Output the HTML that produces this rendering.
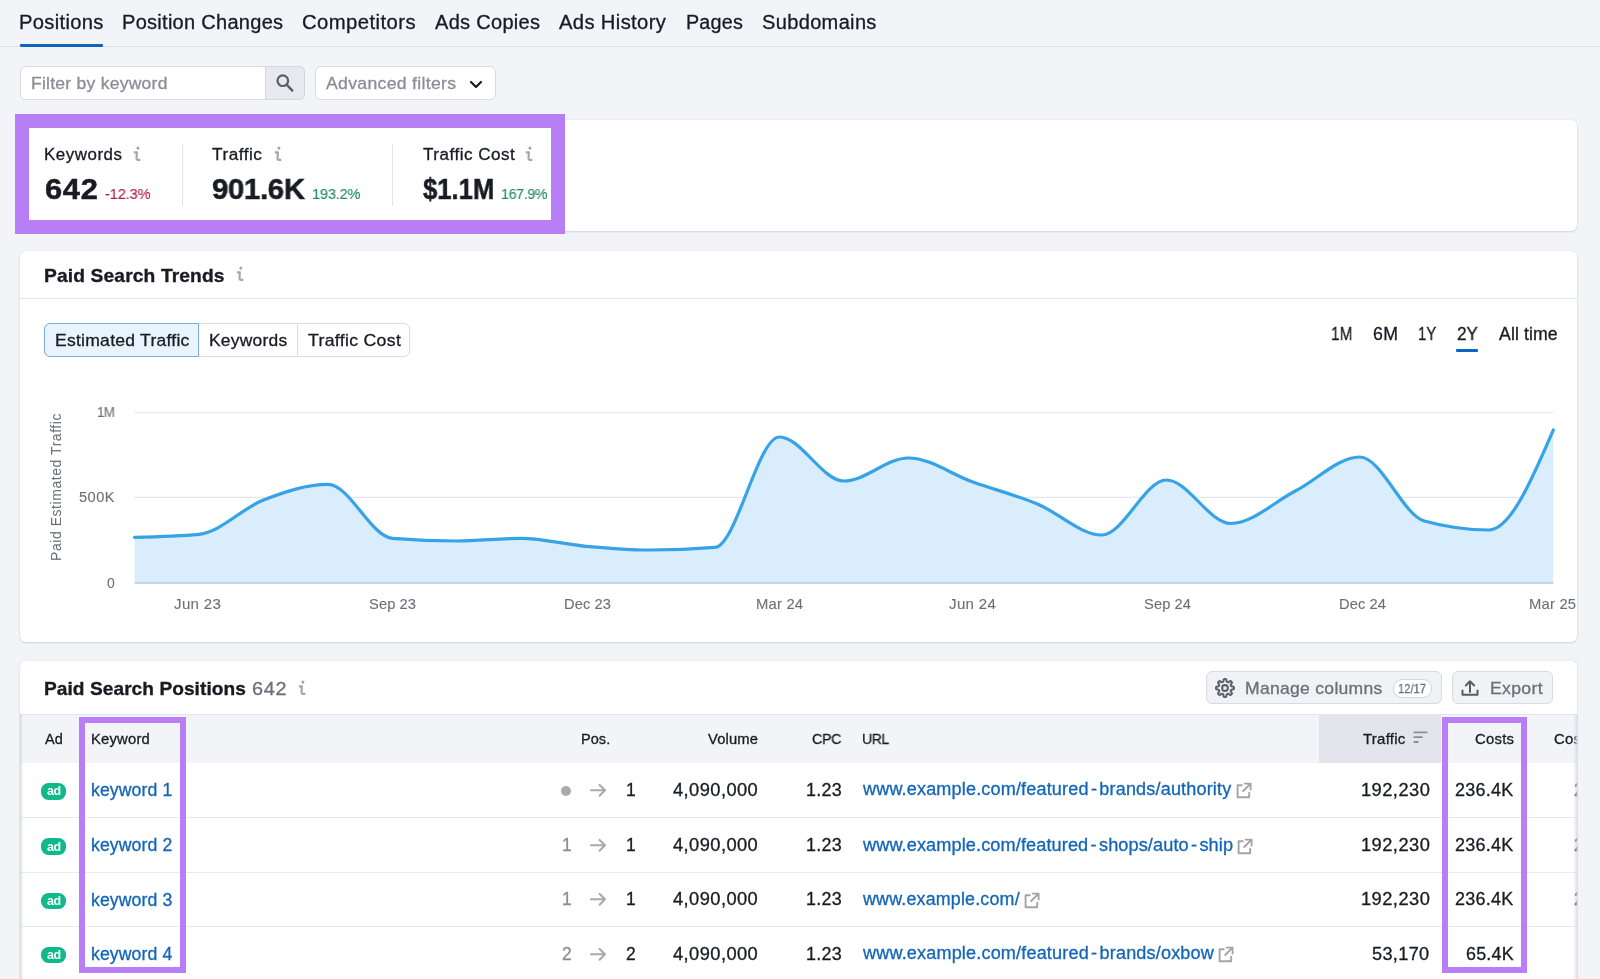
<!DOCTYPE html>
<html><head><meta charset="utf-8"><style>
html,body{margin:0;padding:0;}
body{width:1600px;height:979px;overflow:hidden;position:relative;background:#f3f4f8;font-family:"Liberation Sans",sans-serif;}
.t{position:absolute;white-space:nowrap;line-height:1;will-change:transform;}
.b{position:absolute;box-sizing:border-box;}
</style></head><body>
<div class="b" style="left:0px;top:46px;width:1600px;height:1px;background:#dfe0e6;"></div><span class="t" style="left:18.80px;top:13.00px;font-size:19.5px;color:#191b23;transform:scaleX(1.0337);transform-origin:0.00px 0;letter-spacing:0.322px;-webkit-text-stroke-width:0.3px;">Positions</span><span class="t" style="left:121.80px;top:13.00px;font-size:19.5px;color:#191b23;transform:scaleX(1.0269);transform-origin:0.00px 0;letter-spacing:0.267px;-webkit-text-stroke-width:0.3px;">Position Changes</span><span class="t" style="left:302.10px;top:13.00px;font-size:19.5px;color:#191b23;transform:scaleX(1.0404);transform-origin:0.00px 0;letter-spacing:0.408px;-webkit-text-stroke-width:0.3px;">Competitors</span><span class="t" style="left:434.60px;top:13.00px;font-size:19.5px;color:#191b23;transform:scaleX(1.0264);transform-origin:0.00px 0;letter-spacing:0.285px;-webkit-text-stroke-width:0.3px;">Ads Copies</span><span class="t" style="left:559.10px;top:13.00px;font-size:19.5px;color:#191b23;transform:scaleX(1.0359);transform-origin:0.00px 0;letter-spacing:0.345px;-webkit-text-stroke-width:0.3px;">Ads History</span><span class="t" style="left:685.50px;top:13.00px;font-size:19.5px;color:#191b23;transform:scaleX(1.0137);transform-origin:0.00px 0;letter-spacing:0.187px;-webkit-text-stroke-width:0.3px;">Pages</span><span class="t" style="left:761.60px;top:13.00px;font-size:19.5px;color:#191b23;transform:scaleX(1.0276);transform-origin:0.00px 0;letter-spacing:0.323px;-webkit-text-stroke-width:0.3px;">Subdomains</span><div class="b" style="left:20px;top:44px;width:83px;height:3px;background:#0c66bf;border-radius:1px;"></div><div class="b" style="left:20px;top:66.3px;width:285px;height:33.8px;background:#fff;border:1px solid #dadbe1;border-radius:6px;"></div><div class="b" style="left:265px;top:66.3px;width:40px;height:33.8px;background:#e8e9ef;border:1px solid #d6d7de;border-radius:0 6px 6px 0;"></div><svg class="b" style="left:275px;top:73px" width="20" height="20" viewBox="0 0 20 20"><circle cx="7.8" cy="7.7" r="5.3" fill="none" stroke="#5a5c66" stroke-width="2.2"/><line x1="11.7" y1="11.6" x2="17.3" y2="17.6" stroke="#5a5c66" stroke-width="2.3" stroke-linecap="round"/></svg><span class="t" style="left:30.70px;top:75.00px;font-size:17px;color:#8b8d97;transform:scaleX(1.0310);transform-origin:0.00px 0;letter-spacing:0.242px;-webkit-text-stroke-width:0.3px;">Filter by keyword</span><div class="b" style="left:315.3px;top:66.3px;width:180.5px;height:33.8px;background:#fff;border:1px solid #dadbe1;border-radius:6px;"></div><span class="t" style="left:326.00px;top:75.00px;font-size:17px;color:#8b8d97;transform:scaleX(1.0374);transform-origin:0.00px 0;letter-spacing:0.291px;-webkit-text-stroke-width:0.3px;">Advanced filters</span><svg class="b" style="left:468px;top:77.5px" width="16" height="14" viewBox="0 0 16 14"><polyline points="3,4 8,9 13,4" fill="none" stroke="#191b23" stroke-width="2.2" stroke-linecap="round" stroke-linejoin="round"/></svg><div class="b" style="left:20px;top:120px;width:1557px;height:111px;background:#fff;border-radius:6px;box-shadow:0 0 3px rgba(25,27,35,.07),0 1px 2px rgba(25,27,35,.12);"></div><div class="b" style="left:15px;top:114px;width:550px;height:120px;border:14px solid #b77ef6;"></div><div class="b" style="left:182px;top:144px;width:1px;height:62px;background:#e4e5ea;"></div><div class="b" style="left:392px;top:144px;width:1px;height:62px;background:#e4e5ea;"></div><span class="t" style="left:44.00px;top:147.00px;font-size:16px;color:#191b23;transform:scaleX(1.0552);transform-origin:0.00px 0;letter-spacing:0.525px;-webkit-text-stroke-width:0.3px;">Keywords</span><svg class="b" style="left:133.3px;top:145.9px" width="9" height="16" viewBox="0 0 9 16"><circle cx="4.9" cy="2.1" r="1.55" fill="#a3a5ad"/><path d="M0.9 6.4H3.9L3.5 12.1Q3.4 13.9 5.2 13.9H7.3" fill="none" stroke="#a3a5ad" stroke-width="2.1" stroke-linejoin="round"/></svg><span class="t" style="left:44.90px;top:174.00px;font-size:30px;color:#191b23;transform:scaleX(1.0279);transform-origin:0.00px 0;font-weight:700;letter-spacing:0.681px;-webkit-text-stroke-width:0.5px;">642</span><span class="t" style="left:105.00px;top:186.00px;font-size:15px;color:#b3184b;transform:scaleX(0.9805);transform-origin:0.00px 0;letter-spacing:-0.189px;-webkit-text-stroke-width:0.1px;">-12.3%</span><span class="t" style="left:212.00px;top:147.00px;font-size:16px;color:#191b23;transform:scaleX(1.0734);transform-origin:0.00px 0;letter-spacing:0.497px;-webkit-text-stroke-width:0.3px;">Traffic</span><svg class="b" style="left:274.0px;top:145.8px" width="9" height="16" viewBox="0 0 9 16"><circle cx="4.9" cy="2.1" r="1.55" fill="#a3a5ad"/><path d="M0.9 6.4H3.9L3.5 12.1Q3.4 13.9 5.2 13.9H7.3" fill="none" stroke="#a3a5ad" stroke-width="2.1" stroke-linejoin="round"/></svg><span class="t" style="left:212.00px;top:174.00px;font-size:30px;color:#191b23;transform:scaleX(0.9806);transform-origin:0.00px 0;font-weight:700;letter-spacing:-0.382px;-webkit-text-stroke-width:0.5px;">901.6K</span><span class="t" style="left:312.00px;top:186.00px;font-size:15px;color:#23896a;transform:scaleX(0.9769);transform-origin:0.00px 0;letter-spacing:-0.241px;-webkit-text-stroke-width:0.1px;">193.2%</span><span class="t" style="left:422.50px;top:147.00px;font-size:16px;color:#191b23;transform:scaleX(1.0672);transform-origin:0.00px 0;letter-spacing:0.463px;-webkit-text-stroke-width:0.3px;">Traffic Cost</span><svg class="b" style="left:525.0px;top:145.8px" width="9" height="16" viewBox="0 0 9 16"><circle cx="4.9" cy="2.1" r="1.55" fill="#a3a5ad"/><path d="M0.9 6.4H3.9L3.5 12.1Q3.4 13.9 5.2 13.9H7.3" fill="none" stroke="#a3a5ad" stroke-width="2.1" stroke-linejoin="round"/></svg><span class="t" style="left:422.50px;top:174.00px;font-size:30px;color:#191b23;transform:scaleX(0.8543);transform-origin:0.00px 0;font-weight:700;-webkit-text-stroke-width:0.5px;">$1.1M</span><span class="t" style="left:501.00px;top:186.00px;font-size:15px;color:#23896a;transform:scaleX(0.9572);transform-origin:0.00px 0;letter-spacing:-0.454px;-webkit-text-stroke-width:0.1px;">167.9%</span><div class="b" style="left:20px;top:251px;width:1557px;height:390.5px;background:#fff;border-radius:6px;box-shadow:0 0 3px rgba(25,27,35,.07),0 1px 2px rgba(25,27,35,.12);"></div><div class="b" style="left:20px;top:298px;width:1557px;height:1px;background:#e4e5ea;"></div><span class="t" style="left:44.00px;top:266.00px;font-size:19px;color:#191b23;transform:scaleX(1.0119);transform-origin:0.00px 0;font-weight:700;letter-spacing:0.122px;-webkit-text-stroke-width:0.35px;">Paid Search Trends</span><svg class="b" style="left:235.5px;top:266.0px" width="9" height="16" viewBox="0 0 9 16"><circle cx="4.9" cy="2.1" r="1.55" fill="#a3a5ad"/><path d="M0.9 6.4H3.9L3.5 12.1Q3.4 13.9 5.2 13.9H7.3" fill="none" stroke="#a3a5ad" stroke-width="2.1" stroke-linejoin="round"/></svg><div class="b" style="left:44px;top:323.3px;width:366.3px;height:34.2px;background:#fff;border:1px solid #dcdde3;border-radius:6px;"></div><div class="b" style="left:297px;top:323.3px;width:1px;height:34.2px;background:#dcdde3;"></div><div class="b" style="left:44px;top:323.3px;width:155px;height:34.2px;background:#e8f3fd;border:1px solid #7aaedc;border-radius:6px 0 0 6px;"></div><span class="t" style="left:54.60px;top:332.00px;font-size:17px;color:#191b23;transform:scaleX(1.0320);transform-origin:0.00px 0;letter-spacing:0.245px;-webkit-text-stroke-width:0.3px;">Estimated Traffic</span><span class="t" style="left:208.75px;top:332.00px;font-size:17px;color:#191b23;transform:scaleX(1.0239);transform-origin:0.00px 0;letter-spacing:0.249px;-webkit-text-stroke-width:0.3px;">Keywords</span><span class="t" style="left:307.80px;top:332.00px;font-size:17px;color:#191b23;transform:scaleX(1.0399);transform-origin:0.00px 0;letter-spacing:0.300px;-webkit-text-stroke-width:0.3px;">Traffic Cost</span><span class="t" style="left:1330.50px;top:326.00px;font-size:17.5px;color:#191b23;transform:scaleX(0.8839);transform-origin:0.00px 0;-webkit-text-stroke-width:0.3px;">1M</span><span class="t" style="left:1373.00px;top:326.00px;font-size:17.5px;color:#191b23;transform:scaleX(1.0139);transform-origin:0.00px 0;letter-spacing:0.333px;-webkit-text-stroke-width:0.3px;">6M</span><span class="t" style="left:1418.00px;top:326.00px;font-size:17.5px;color:#191b23;transform:scaleX(0.8513);transform-origin:0.00px 0;-webkit-text-stroke-width:0.3px;">1Y</span><span class="t" style="left:1456.75px;top:326.00px;font-size:17.5px;color:#191b23;transform:scaleX(0.9840);transform-origin:0.00px 0;letter-spacing:-0.349px;-webkit-text-stroke-width:0.3px;">2Y</span><span class="t" style="left:1498.75px;top:326.00px;font-size:17.5px;color:#191b23;transform:scaleX(1.0118);transform-origin:0.00px 0;letter-spacing:0.095px;-webkit-text-stroke-width:0.3px;">All time</span><div class="b" style="left:1456.25px;top:349.2px;width:21.75px;height:2.6px;background:#0c66bf;border-radius:1px;"></div><svg class="b" style="left:0;top:0" width="1600" height="979" viewBox="0 0 1600 979">
<line x1="134.5" y1="412.5" x2="1553.3" y2="412.5" stroke="#e6e7ec" stroke-width="1.2"/>
<line x1="134.5" y1="497.4" x2="1553.3" y2="497.4" stroke="#e6e7ec" stroke-width="1.2"/>
<path d="M134.50,537.30 C156.00,536.80 177.49,536.30 198.99,534.30 C220.49,532.30 241.98,508.32 263.48,500.00 C284.98,491.68 306.48,484.40 327.97,484.40 C349.47,484.40 370.97,536.67 392.46,538.40 C413.96,540.13 435.46,541.00 456.95,541.00 C478.45,541.00 499.95,538.40 521.45,538.40 C542.94,538.40 564.44,544.37 585.94,546.30 C607.43,548.23 628.93,550.00 650.43,550.00 C671.92,550.00 693.42,549.13 714.92,547.40 C736.42,545.67 757.91,437.00 779.41,437.00 C800.91,437.00 822.40,481.00 843.90,481.00 C865.40,481.00 886.89,458.00 908.39,458.00 C929.89,458.00 951.38,474.33 972.88,482.00 C994.38,489.67 1015.88,495.17 1037.37,504.00 C1058.87,512.83 1080.37,535.00 1101.86,535.00 C1123.36,535.00 1144.86,480.00 1166.35,480.00 C1187.85,480.00 1209.35,523.50 1230.85,523.50 C1252.34,523.50 1273.84,502.08 1295.34,491.00 C1316.83,479.92 1338.33,457.00 1359.83,457.00 C1381.32,457.00 1402.82,515.00 1424.32,521.00 C1445.82,527.00 1467.31,530.00 1488.81,530.00 C1510.31,530.00 1531.80,480.00 1553.30,430.00 L1553.30,583 L134.50,583 Z" fill="#d9edfc"/>
<line x1="134.5" y1="583" x2="1553.3" y2="583" stroke="#b9c8d6" stroke-width="1.4"/>
<path d="M134.50,537.30 C156.00,536.80 177.49,536.30 198.99,534.30 C220.49,532.30 241.98,508.32 263.48,500.00 C284.98,491.68 306.48,484.40 327.97,484.40 C349.47,484.40 370.97,536.67 392.46,538.40 C413.96,540.13 435.46,541.00 456.95,541.00 C478.45,541.00 499.95,538.40 521.45,538.40 C542.94,538.40 564.44,544.37 585.94,546.30 C607.43,548.23 628.93,550.00 650.43,550.00 C671.92,550.00 693.42,549.13 714.92,547.40 C736.42,545.67 757.91,437.00 779.41,437.00 C800.91,437.00 822.40,481.00 843.90,481.00 C865.40,481.00 886.89,458.00 908.39,458.00 C929.89,458.00 951.38,474.33 972.88,482.00 C994.38,489.67 1015.88,495.17 1037.37,504.00 C1058.87,512.83 1080.37,535.00 1101.86,535.00 C1123.36,535.00 1144.86,480.00 1166.35,480.00 C1187.85,480.00 1209.35,523.50 1230.85,523.50 C1252.34,523.50 1273.84,502.08 1295.34,491.00 C1316.83,479.92 1338.33,457.00 1359.83,457.00 C1381.32,457.00 1402.82,515.00 1424.32,521.00 C1445.82,527.00 1467.31,530.00 1488.81,530.00 C1510.31,530.00 1531.80,480.00 1553.30,430.00" fill="none" stroke="#35a3e6" stroke-width="3.2" stroke-linejoin="round" stroke-linecap="round"/>
</svg><span class="t" style="left:96.70px;top:405.00px;font-size:14px;color:#6c6e79;transform:scaleX(0.9599);transform-origin:0.00px 0;letter-spacing:-0.813px;-webkit-text-stroke-width:0.1px;">1M</span><span class="t" style="left:79.00px;top:490.00px;font-size:14px;color:#6c6e79;transform:scaleX(1.0445);transform-origin:0.00px 0;letter-spacing:0.464px;-webkit-text-stroke-width:0.1px;">500K</span><span class="t" style="left:106.70px;top:576.00px;font-size:14px;color:#6c6e79;-webkit-text-stroke-width:0.1px;">0</span><span class="t" style="left:173.90px;top:597.00px;font-size:14.5px;color:#6c6e79;transform:scaleX(1.0393);transform-origin:0.00px 0;letter-spacing:0.330px;-webkit-text-stroke-width:0.1px;">Jun 23</span><span class="t" style="left:368.50px;top:597.00px;font-size:14.5px;color:#6c6e79;transform:scaleX(1.0113);transform-origin:0.00px 0;letter-spacing:0.102px;-webkit-text-stroke-width:0.1px;">Sep 23</span><span class="t" style="left:563.50px;top:597.00px;font-size:14.5px;color:#6c6e79;transform:scaleX(1.0113);transform-origin:0.00px 0;letter-spacing:0.102px;-webkit-text-stroke-width:0.1px;">Dec 23</span><span class="t" style="left:756.00px;top:597.00px;font-size:14.5px;color:#6c6e79;transform:scaleX(1.0211);transform-origin:0.00px 0;letter-spacing:0.187px;-webkit-text-stroke-width:0.1px;">Mar 24</span><span class="t" style="left:948.50px;top:597.00px;font-size:14.5px;color:#6c6e79;transform:scaleX(1.0393);transform-origin:0.00px 0;letter-spacing:0.330px;-webkit-text-stroke-width:0.1px;">Jun 24</span><span class="t" style="left:1143.50px;top:597.00px;font-size:14.5px;color:#6c6e79;transform:scaleX(1.0113);transform-origin:0.00px 0;letter-spacing:0.102px;-webkit-text-stroke-width:0.1px;">Sep 24</span><span class="t" style="left:1338.50px;top:597.00px;font-size:14.5px;color:#6c6e79;transform:scaleX(1.0113);transform-origin:0.00px 0;letter-spacing:0.102px;-webkit-text-stroke-width:0.1px;">Dec 24</span><span class="t" style="left:1528.80px;top:597.00px;font-size:14.5px;color:#6c6e79;transform:scaleX(1.0211);transform-origin:0.00px 0;letter-spacing:0.187px;-webkit-text-stroke-width:0.1px;">Mar 25</span><span class="t" style="left:55.5px;top:487.3px;font-size:14px;color:#6c6e79;transform:translate(-50%,-50%) rotate(-90deg);letter-spacing:0.55px;">Paid Estimated Traffic</span><div class="b" style="left:20px;top:661px;width:1557px;height:330px;background:#fff;border-radius:6px;box-shadow:0 0 3px rgba(25,27,35,.07),0 1px 2px rgba(25,27,35,.12);overflow:hidden;"></div><span class="t" style="left:44.00px;top:679.00px;font-size:19px;color:#191b23;transform:scaleX(1.0058);transform-origin:0.00px 0;font-weight:700;letter-spacing:0.057px;-webkit-text-stroke-width:0.35px;">Paid Search Positions</span><span class="t" style="left:252.20px;top:679.00px;font-size:19px;color:#6c6e79;transform:scaleX(1.0468);transform-origin:0.00px 0;letter-spacing:0.709px;-webkit-text-stroke-width:0.3px;">642</span><svg class="b" style="left:298.1px;top:679.9px" width="9" height="16" viewBox="0 0 9 16"><circle cx="4.9" cy="2.1" r="1.55" fill="#a3a5ad"/><path d="M0.9 6.4H3.9L3.5 12.1Q3.4 13.9 5.2 13.9H7.3" fill="none" stroke="#a3a5ad" stroke-width="2.1" stroke-linejoin="round"/></svg><div class="b" style="left:1206px;top:670.8px;width:236px;height:33.3px;background:#f1f2f5;border:1px solid #d9dae0;border-radius:6px;"></div><svg class="b" style="left:1212.9px;top:675.6px" width="24" height="24" viewBox="0 0 24 24"><path fill="none" stroke="#5f626d" stroke-width="2.1" stroke-linejoin="round" d="M20.95,12.00 L20.94,12.23 L20.92,12.47 L20.88,12.70 L20.80,12.93 L20.65,13.14 L20.35,13.32 L19.86,13.46 L19.25,13.54 L18.75,13.62 L18.45,13.73 L18.28,13.86 L18.17,14.01 L18.09,14.16 L18.02,14.31 L17.96,14.47 L17.90,14.62 L17.83,14.78 L17.78,14.95 L17.75,15.12 L17.78,15.34 L17.92,15.63 L18.21,16.04 L18.58,16.53 L18.84,16.97 L18.92,17.31 L18.88,17.57 L18.78,17.79 L18.64,17.98 L18.49,18.16 L18.33,18.33 L18.16,18.49 L17.98,18.64 L17.79,18.78 L17.57,18.88 L17.31,18.92 L16.97,18.84 L16.53,18.58 L16.04,18.21 L15.63,17.92 L15.34,17.78 L15.12,17.75 L14.95,17.78 L14.78,17.83 L14.62,17.90 L14.47,17.96 L14.31,18.02 L14.16,18.09 L14.01,18.17 L13.86,18.28 L13.73,18.45 L13.62,18.75 L13.54,19.25 L13.46,19.86 L13.32,20.35 L13.14,20.65 L12.93,20.80 L12.70,20.88 L12.47,20.92 L12.23,20.94 L12.00,20.95 L11.77,20.94 L11.53,20.92 L11.30,20.88 L11.07,20.80 L10.86,20.65 L10.68,20.35 L10.54,19.86 L10.46,19.25 L10.38,18.75 L10.27,18.45 L10.14,18.28 L9.99,18.17 L9.84,18.09 L9.69,18.02 L9.53,17.96 L9.38,17.90 L9.22,17.83 L9.05,17.78 L8.88,17.75 L8.66,17.78 L8.37,17.92 L7.96,18.21 L7.47,18.58 L7.03,18.84 L6.69,18.92 L6.43,18.88 L6.21,18.78 L6.02,18.64 L5.84,18.49 L5.67,18.33 L5.51,18.16 L5.36,17.98 L5.22,17.79 L5.12,17.57 L5.08,17.31 L5.16,16.97 L5.42,16.53 L5.79,16.04 L6.08,15.63 L6.22,15.34 L6.25,15.12 L6.22,14.95 L6.17,14.78 L6.10,14.62 L6.04,14.47 L5.98,14.31 L5.91,14.16 L5.83,14.01 L5.72,13.86 L5.55,13.73 L5.25,13.62 L4.75,13.54 L4.14,13.46 L3.65,13.32 L3.35,13.14 L3.20,12.93 L3.12,12.70 L3.08,12.47 L3.06,12.23 L3.05,12.00 L3.06,11.77 L3.08,11.53 L3.12,11.30 L3.20,11.07 L3.35,10.86 L3.65,10.68 L4.14,10.54 L4.75,10.46 L5.25,10.38 L5.55,10.27 L5.72,10.14 L5.83,9.99 L5.91,9.84 L5.98,9.69 L6.04,9.53 L6.10,9.38 L6.17,9.22 L6.22,9.05 L6.25,8.88 L6.22,8.66 L6.08,8.37 L5.79,7.96 L5.42,7.47 L5.16,7.03 L5.08,6.69 L5.12,6.43 L5.22,6.21 L5.36,6.02 L5.51,5.84 L5.67,5.67 L5.84,5.51 L6.02,5.36 L6.21,5.22 L6.43,5.12 L6.69,5.08 L7.03,5.16 L7.47,5.42 L7.96,5.79 L8.37,6.08 L8.66,6.22 L8.88,6.25 L9.05,6.22 L9.22,6.17 L9.38,6.10 L9.53,6.04 L9.69,5.98 L9.84,5.91 L9.99,5.83 L10.14,5.72 L10.27,5.55 L10.38,5.25 L10.46,4.75 L10.54,4.14 L10.68,3.65 L10.86,3.35 L11.07,3.20 L11.30,3.12 L11.53,3.08 L11.77,3.06 L12.00,3.05 L12.23,3.06 L12.47,3.08 L12.70,3.12 L12.93,3.20 L13.14,3.35 L13.32,3.65 L13.46,4.14 L13.54,4.75 L13.62,5.25 L13.73,5.55 L13.86,5.72 L14.01,5.83 L14.16,5.91 L14.31,5.98 L14.47,6.04 L14.62,6.10 L14.78,6.17 L14.95,6.22 L15.12,6.25 L15.34,6.22 L15.63,6.08 L16.04,5.79 L16.53,5.42 L16.97,5.16 L17.31,5.08 L17.57,5.12 L17.79,5.22 L17.98,5.36 L18.16,5.51 L18.33,5.67 L18.49,5.84 L18.64,6.02 L18.78,6.21 L18.88,6.43 L18.92,6.69 L18.84,7.03 L18.58,7.47 L18.21,7.96 L17.92,8.37 L17.78,8.66 L17.75,8.88 L17.78,9.05 L17.83,9.22 L17.90,9.38 L17.96,9.53 L18.02,9.69 L18.09,9.84 L18.17,9.99 L18.28,10.14 L18.45,10.27 L18.75,10.38 L19.25,10.46 L19.86,10.54 L20.35,10.68 L20.65,10.86 L20.80,11.07 L20.88,11.30 L20.92,11.53 L20.94,11.77Z"/><circle cx="12" cy="12" r="2.9" fill="none" stroke="#5f626d" stroke-width="2.1"/></svg><span class="t" style="left:1245.00px;top:680.00px;font-size:17px;color:#6c6e79;transform:scaleX(1.0303);transform-origin:0.00px 0;letter-spacing:0.293px;-webkit-text-stroke-width:0.3px;">Manage columns</span><div class="b" style="left:1393px;top:679px;width:38.5px;height:18.5px;background:#fff;border:1px solid #d4d5dd;border-radius:9px;"></div><span class="t" style="left:1398.30px;top:682.00px;font-size:13px;color:#6c6e79;transform:scaleX(0.8598);transform-origin:0.00px 0;-webkit-text-stroke-width:0.3px;">12/17</span><div class="b" style="left:1451.5px;top:670.8px;width:101px;height:33.3px;background:#f1f2f5;border:1px solid #d9dae0;border-radius:6px;"></div><svg class="b" style="left:1460px;top:678px" width="20" height="20" viewBox="0 0 20 20"><path d="M10 14V3.5M5.8 7.5L10 3.3l4.2 4.2M2.5 12.5v4.2h15v-4.2" fill="none" stroke="#575a66" stroke-width="2" stroke-linecap="round" stroke-linejoin="round"/></svg><span class="t" style="left:1490.40px;top:680.00px;font-size:17px;color:#6c6e79;transform:scaleX(1.0353);transform-origin:0.00px 0;letter-spacing:0.335px;-webkit-text-stroke-width:0.3px;">Export</span><div class="b" style="left:20px;top:713.5px;width:1557px;height:49.5px;background:#f3f4f8;border-top:1px solid #e4e5ea;"></div><div class="b" style="left:1319px;top:713.5px;width:122px;height:49.5px;background:#e4e5ec;"></div><span class="t" style="left:44.75px;top:732.00px;font-size:14.5px;color:#191b23;letter-spacing:-0.012px;-webkit-text-stroke-width:0.3px;">Ad</span><span class="t" style="left:90.60px;top:732.00px;font-size:14.5px;color:#191b23;transform:scaleX(1.0212);transform-origin:0.00px 0;letter-spacing:0.195px;-webkit-text-stroke-width:0.3px;">Keyword</span><span class="t" style="left:580.80px;top:732.00px;font-size:14.5px;color:#191b23;transform:scaleX(1.0034);transform-origin:0.00px 0;letter-spacing:0.033px;-webkit-text-stroke-width:0.3px;">Pos.</span><span class="t" style="left:708.00px;top:732.00px;font-size:14.5px;color:#191b23;transform:scaleX(1.0170);transform-origin:0.00px 0;letter-spacing:0.162px;-webkit-text-stroke-width:0.3px;">Volume</span><span class="t" style="left:812.20px;top:732.00px;font-size:14.5px;color:#191b23;transform:scaleX(0.9805);transform-origin:0.00px 0;letter-spacing:-0.305px;-webkit-text-stroke-width:0.3px;">CPC</span><span class="t" style="left:862.20px;top:732.00px;font-size:14.5px;color:#191b23;transform:scaleX(0.9690);transform-origin:0.00px 0;letter-spacing:-0.464px;-webkit-text-stroke-width:0.3px;">URL</span><span class="t" style="left:1362.50px;top:732.00px;font-size:14.5px;color:#191b23;transform:scaleX(1.0353);transform-origin:0.00px 0;letter-spacing:0.224px;-webkit-text-stroke-width:0.3px;">Traffic</span><svg class="b" style="left:1412px;top:730px" width="16" height="14" viewBox="0 0 16 14"><path d="M2.3 2.4h12.4M2.3 7.2h7.6M2.3 12h3.4" stroke="#8b8d97" stroke-width="1.8" stroke-linecap="round"/></svg><span class="t" style="left:1474.60px;top:732.00px;font-size:14.5px;color:#191b23;transform:scaleX(1.0250);transform-origin:0.00px 0;letter-spacing:0.226px;-webkit-text-stroke-width:0.3px;">Costs</span><span class="t" style="left:1553.60px;top:732.00px;font-size:14.5px;color:#191b23;transform:scaleX(1.0250);transform-origin:0.00px 0;letter-spacing:0.226px;-webkit-text-stroke-width:0.3px;">Costs</span><div class="b" style="left:20px;top:817.4px;width:1557px;height:1px;background:#e9eaee;"></div><div class="b" style="left:20px;top:872.3px;width:1557px;height:1px;background:#e9eaee;"></div><div class="b" style="left:20px;top:926.4px;width:1557px;height:1px;background:#e9eaee;"></div><div class="b" style="left:41px;top:783.1999999999999px;width:25px;height:16.6px;background:#13b88a;border-radius:7.5px;"></div><span class="t" style="left:46.50px;top:785.00px;font-size:12.5px;color:#f4fffa;transform:scaleX(0.9738);transform-origin:0.00px 0;font-weight:700;letter-spacing:-0.391px;">ad</span><span class="t" style="left:90.90px;top:782.00px;font-size:17.5px;color:#1265b8;transform:scaleX(1.0094);transform-origin:0.00px 0;letter-spacing:0.093px;-webkit-text-stroke-width:0.3px;">keyword 1</span><div class="b" style="left:561.2px;top:785.5px;width:10px;height:10px;background:#a9aaae;border-radius:50%;"></div><svg class="b" style="left:589px;top:781.9px" width="19" height="16" viewBox="0 0 19 16"><path d="M2 8.3h14M10.6 2.9L16 8.3l-5.4 5.4" fill="none" stroke="#a9aaae" stroke-width="2.1" stroke-linecap="round" stroke-linejoin="round"/></svg><span class="t" style="left:626.00px;top:782.00px;font-size:17.5px;color:#191b23;-webkit-text-stroke-width:0.3px;">1</span><span class="t" style="left:673.40px;top:782.00px;font-size:17.5px;color:#191b23;transform:scaleX(1.0445);transform-origin:0.00px 0;letter-spacing:0.414px;-webkit-text-stroke-width:0.3px;">4,090,000</span><span class="t" style="left:805.60px;top:782.00px;font-size:17.5px;color:#191b23;transform:scaleX(1.0244);transform-origin:0.00px 0;letter-spacing:0.270px;-webkit-text-stroke-width:0.3px;">1.23</span><span class="t" style="left:862.69px;top:781.00px;font-size:17.5px;color:#1265b8;transform:scaleX(1.0317);transform-origin:-0.09px 0;letter-spacing:0.156px;-webkit-text-stroke-width:0.3px;">www.example.com/featured<span style="margin:0 2.2px">-</span>brands/authority</span><svg class="b" style="left:1234.6px;top:782.3px" width="17" height="17" viewBox="0 0 17 17"><path d="M6.8 3.2H2.6v12h11.6v-4.4M9.6 1.6h6v6M15.3 1.9L8.2 9" fill="none" stroke="#a3a4aa" stroke-width="1.9" stroke-linecap="round" stroke-linejoin="round"/></svg><span class="t" style="left:1360.60px;top:782.00px;font-size:17.5px;color:#191b23;transform:scaleX(1.0438);transform-origin:0.00px 0;letter-spacing:0.442px;-webkit-text-stroke-width:0.3px;">192,230</span><span class="t" style="left:1455.10px;top:782.00px;font-size:17.5px;color:#191b23;transform:scaleX(1.0255);transform-origin:0.00px 0;letter-spacing:0.275px;-webkit-text-stroke-width:0.3px;">236.4K</span><span class="t" style="left:1574.40px;top:782.00px;font-size:17.5px;color:#191b23;-webkit-text-stroke-width:0.3px;">236.4K</span><div class="b" style="left:41px;top:838.4px;width:25px;height:16.6px;background:#13b88a;border-radius:7.5px;"></div><span class="t" style="left:46.50px;top:841.00px;font-size:12.5px;color:#f4fffa;transform:scaleX(0.9738);transform-origin:0.00px 0;font-weight:700;letter-spacing:-0.391px;">ad</span><span class="t" style="left:90.90px;top:837.00px;font-size:17.5px;color:#1265b8;transform:scaleX(1.0094);transform-origin:0.00px 0;letter-spacing:0.093px;-webkit-text-stroke-width:0.3px;">keyword 2</span><span class="t" style="left:561.80px;top:837.00px;font-size:17.5px;color:#8b8d97;-webkit-text-stroke-width:0.3px;">1</span><svg class="b" style="left:589px;top:837.1px" width="19" height="16" viewBox="0 0 19 16"><path d="M2 8.3h14M10.6 2.9L16 8.3l-5.4 5.4" fill="none" stroke="#a9aaae" stroke-width="2.1" stroke-linecap="round" stroke-linejoin="round"/></svg><span class="t" style="left:626.00px;top:837.00px;font-size:17.5px;color:#191b23;-webkit-text-stroke-width:0.3px;">1</span><span class="t" style="left:673.40px;top:837.00px;font-size:17.5px;color:#191b23;transform:scaleX(1.0445);transform-origin:0.00px 0;letter-spacing:0.414px;-webkit-text-stroke-width:0.3px;">4,090,000</span><span class="t" style="left:805.60px;top:837.00px;font-size:17.5px;color:#191b23;transform:scaleX(1.0244);transform-origin:0.00px 0;letter-spacing:0.270px;-webkit-text-stroke-width:0.3px;">1.23</span><span class="t" style="left:862.69px;top:837.00px;font-size:17.5px;color:#1265b8;transform:scaleX(1.0373);transform-origin:-0.09px 0;letter-spacing:0.092px;-webkit-text-stroke-width:0.3px;">www.example.com/featured<span style="margin:0 2.2px">-</span>shops/auto<span style="margin:0 2.2px">-</span>ship</span><svg class="b" style="left:1236.3px;top:837.5px" width="17" height="17" viewBox="0 0 17 17"><path d="M6.8 3.2H2.6v12h11.6v-4.4M9.6 1.6h6v6M15.3 1.9L8.2 9" fill="none" stroke="#a3a4aa" stroke-width="1.9" stroke-linecap="round" stroke-linejoin="round"/></svg><span class="t" style="left:1360.60px;top:837.00px;font-size:17.5px;color:#191b23;transform:scaleX(1.0438);transform-origin:0.00px 0;letter-spacing:0.442px;-webkit-text-stroke-width:0.3px;">192,230</span><span class="t" style="left:1455.10px;top:837.00px;font-size:17.5px;color:#191b23;transform:scaleX(1.0255);transform-origin:0.00px 0;letter-spacing:0.275px;-webkit-text-stroke-width:0.3px;">236.4K</span><span class="t" style="left:1574.40px;top:837.00px;font-size:17.5px;color:#191b23;-webkit-text-stroke-width:0.3px;">236.4K</span><div class="b" style="left:41px;top:892.6999999999999px;width:25px;height:16.6px;background:#13b88a;border-radius:7.5px;"></div><span class="t" style="left:46.50px;top:895.00px;font-size:12.5px;color:#f4fffa;transform:scaleX(0.9738);transform-origin:0.00px 0;font-weight:700;letter-spacing:-0.391px;">ad</span><span class="t" style="left:90.90px;top:892.00px;font-size:17.5px;color:#1265b8;transform:scaleX(1.0094);transform-origin:0.00px 0;letter-spacing:0.093px;-webkit-text-stroke-width:0.3px;">keyword 3</span><span class="t" style="left:561.80px;top:891.00px;font-size:17.5px;color:#8b8d97;-webkit-text-stroke-width:0.3px;">1</span><svg class="b" style="left:589px;top:891.4px" width="19" height="16" viewBox="0 0 19 16"><path d="M2 8.3h14M10.6 2.9L16 8.3l-5.4 5.4" fill="none" stroke="#a9aaae" stroke-width="2.1" stroke-linecap="round" stroke-linejoin="round"/></svg><span class="t" style="left:626.00px;top:891.00px;font-size:17.5px;color:#191b23;-webkit-text-stroke-width:0.3px;">1</span><span class="t" style="left:673.40px;top:891.00px;font-size:17.5px;color:#191b23;transform:scaleX(1.0445);transform-origin:0.00px 0;letter-spacing:0.414px;-webkit-text-stroke-width:0.3px;">4,090,000</span><span class="t" style="left:805.60px;top:891.00px;font-size:17.5px;color:#191b23;transform:scaleX(1.0244);transform-origin:0.00px 0;letter-spacing:0.270px;-webkit-text-stroke-width:0.3px;">1.23</span><span class="t" style="left:862.69px;top:891.00px;font-size:17.5px;color:#1265b8;transform:scaleX(1.0194);transform-origin:-0.09px 0;letter-spacing:0.191px;-webkit-text-stroke-width:0.3px;">www.example.com/</span><svg class="b" style="left:1022.9px;top:891.8px" width="17" height="17" viewBox="0 0 17 17"><path d="M6.8 3.2H2.6v12h11.6v-4.4M9.6 1.6h6v6M15.3 1.9L8.2 9" fill="none" stroke="#a3a4aa" stroke-width="1.9" stroke-linecap="round" stroke-linejoin="round"/></svg><span class="t" style="left:1360.60px;top:891.00px;font-size:17.5px;color:#191b23;transform:scaleX(1.0438);transform-origin:0.00px 0;letter-spacing:0.442px;-webkit-text-stroke-width:0.3px;">192,230</span><span class="t" style="left:1455.10px;top:891.00px;font-size:17.5px;color:#191b23;transform:scaleX(1.0255);transform-origin:0.00px 0;letter-spacing:0.275px;-webkit-text-stroke-width:0.3px;">236.4K</span><span class="t" style="left:1574.40px;top:891.00px;font-size:17.5px;color:#191b23;-webkit-text-stroke-width:0.3px;">236.4K</span><div class="b" style="left:41px;top:946.9px;width:25px;height:16.6px;background:#13b88a;border-radius:7.5px;"></div><span class="t" style="left:46.50px;top:949.00px;font-size:12.5px;color:#f4fffa;transform:scaleX(0.9738);transform-origin:0.00px 0;font-weight:700;letter-spacing:-0.391px;">ad</span><span class="t" style="left:90.90px;top:946.00px;font-size:17.5px;color:#1265b8;transform:scaleX(1.0094);transform-origin:0.00px 0;letter-spacing:0.093px;-webkit-text-stroke-width:0.3px;">keyword 4</span><span class="t" style="left:561.80px;top:946.00px;font-size:17.5px;color:#8b8d97;-webkit-text-stroke-width:0.3px;">2</span><svg class="b" style="left:589px;top:945.6px" width="19" height="16" viewBox="0 0 19 16"><path d="M2 8.3h14M10.6 2.9L16 8.3l-5.4 5.4" fill="none" stroke="#a9aaae" stroke-width="2.1" stroke-linecap="round" stroke-linejoin="round"/></svg><span class="t" style="left:626.00px;top:946.00px;font-size:17.5px;color:#191b23;-webkit-text-stroke-width:0.3px;">2</span><span class="t" style="left:673.40px;top:946.00px;font-size:17.5px;color:#191b23;transform:scaleX(1.0445);transform-origin:0.00px 0;letter-spacing:0.414px;-webkit-text-stroke-width:0.3px;">4,090,000</span><span class="t" style="left:805.60px;top:946.00px;font-size:17.5px;color:#191b23;transform:scaleX(1.0244);transform-origin:0.00px 0;letter-spacing:0.270px;-webkit-text-stroke-width:0.3px;">1.23</span><span class="t" style="left:862.69px;top:945.00px;font-size:17.5px;color:#1265b8;transform:scaleX(1.0320);transform-origin:-0.09px 0;letter-spacing:0.162px;-webkit-text-stroke-width:0.3px;">www.example.com/featured<span style="margin:0 2.2px">-</span>brands/oxbow</span><svg class="b" style="left:1217.2px;top:946.0px" width="17" height="17" viewBox="0 0 17 17"><path d="M6.8 3.2H2.6v12h11.6v-4.4M9.6 1.6h6v6M15.3 1.9L8.2 9" fill="none" stroke="#a3a4aa" stroke-width="1.9" stroke-linecap="round" stroke-linejoin="round"/></svg><span class="t" style="left:1372.20px;top:946.00px;font-size:17.5px;color:#191b23;transform:scaleX(1.0341);transform-origin:0.00px 0;letter-spacing:0.353px;-webkit-text-stroke-width:0.3px;">53,170</span><span class="t" style="left:1465.80px;top:946.00px;font-size:17.5px;color:#191b23;transform:scaleX(1.0201);transform-origin:0.00px 0;letter-spacing:0.225px;-webkit-text-stroke-width:0.3px;">65.4K</span><div class="b" style="left:1573px;top:713.5px;width:4.5px;height:270px;background:linear-gradient(to right,rgba(225,226,232,0),rgba(220,221,228,1));"></div><div class="b" style="left:20px;top:713.5px;width:3px;height:270px;background:linear-gradient(to right,rgba(200,201,208,.7),rgba(255,255,255,0));"></div><div class="b" style="left:79px;top:717px;width:107px;height:255.6px;border:6.5px solid #b77ef6;"></div><div class="b" style="left:1441.5px;top:717px;width:85.4px;height:255.5px;border:6.5px solid #b77ef6;"></div><div class="b" style="left:1577.5px;top:650px;width:22.5px;height:329px;background:#f3f4f8;"></div>

</body></html>
